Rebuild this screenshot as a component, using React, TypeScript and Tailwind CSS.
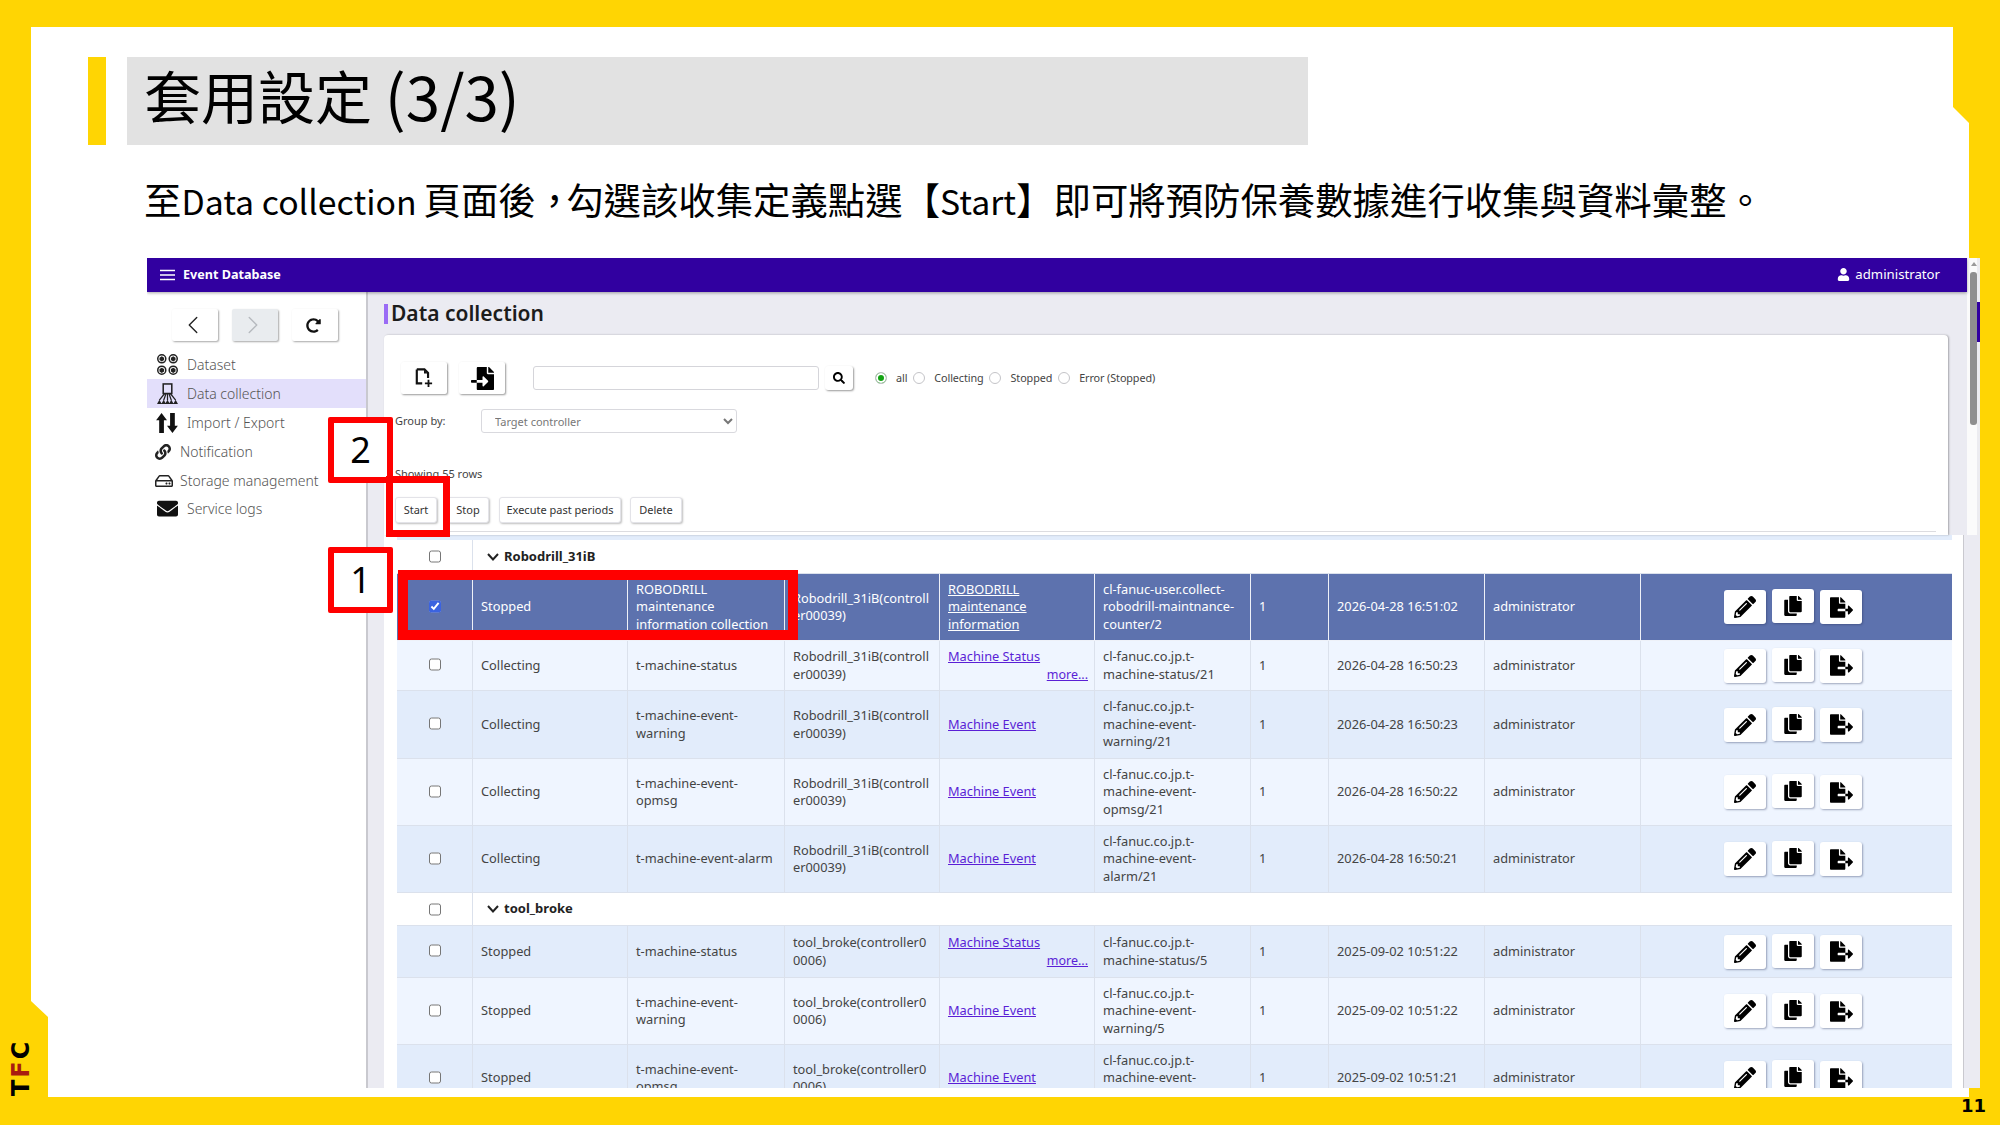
import { ChevronLeft, ChevronRight } from 'lucide-react';
import {
  FaCopy,
  FaEnvelope,
  FaFileExport,
  FaFileImport,
  FaLink,
  FaPencilAlt,
  FaRedoAlt,
  FaRegHdd,
  FaSearch,
  FaUser,
} from 'react-icons/fa';

const COLS = 'grid grid-cols-[76px_155px_157px_155px_155px_156px_78px_156px_156px_311px]';

type Row = {
  status: string;
  name: string;
  target: string;
  links: string;
  more?: boolean;
  id: string;
  date: string;
  tone: 'sel' | 'light' | 'dark';
  h: string;
};

const robodrill: Row[] = [
  {
    status: 'Stopped',
    name: 'ROBODRILL\nmaintenance\ninformation collection',
    target: 'Robodrill_31iB(controll\ner00039)',
    links: 'ROBODRILL\nmaintenance\ninformation',
    id: 'cl-fanuc-user.collect-\nrobodrill-maintnance-\ncounter/2',
    date: '2026-04-28 16:51:02',
    tone: 'sel',
    h: 'h-[67px]',
  },
  {
    status: 'Collecting',
    name: 't-machine-status',
    target: 'Robodrill_31iB(controll\ner00039)',
    links: 'Machine Status',
    more: true,
    id: 'cl-fanuc.co.jp.t-\nmachine-status/21',
    date: '2026-04-28 16:50:23',
    tone: 'light',
    h: 'h-[50px]',
  },
  {
    status: 'Collecting',
    name: 't-machine-event-\nwarning',
    target: 'Robodrill_31iB(controll\ner00039)',
    links: 'Machine Event',
    id: 'cl-fanuc.co.jp.t-\nmachine-event-\nwarning/21',
    date: '2026-04-28 16:50:23',
    tone: 'dark',
    h: 'h-[68px]',
  },
  {
    status: 'Collecting',
    name: 't-machine-event-\nopmsg',
    target: 'Robodrill_31iB(controll\ner00039)',
    links: 'Machine Event',
    id: 'cl-fanuc.co.jp.t-\nmachine-event-\nopmsg/21',
    date: '2026-04-28 16:50:22',
    tone: 'light',
    h: 'h-[67px]',
  },
  {
    status: 'Collecting',
    name: 't-machine-event-alarm',
    target: 'Robodrill_31iB(controll\ner00039)',
    links: 'Machine Event',
    id: 'cl-fanuc.co.jp.t-\nmachine-event-\nalarm/21',
    date: '2026-04-28 16:50:21',
    tone: 'dark',
    h: 'h-[67px]',
  },
];

const toolBroke: Row[] = [
  {
    status: 'Stopped',
    name: 't-machine-status',
    target: 'tool_broke(controller0\n0006)',
    links: 'Machine Status',
    more: true,
    id: 'cl-fanuc.co.jp.t-\nmachine-status/5',
    date: '2025-09-02 10:51:22',
    tone: 'dark',
    h: 'h-[52px]',
  },
  {
    status: 'Stopped',
    name: 't-machine-event-\nwarning',
    target: 'tool_broke(controller0\n0006)',
    links: 'Machine Event',
    id: 'cl-fanuc.co.jp.t-\nmachine-event-\nwarning/5',
    date: '2025-09-02 10:51:22',
    tone: 'light',
    h: 'h-[67px]',
  },
  {
    status: 'Stopped',
    name: 't-machine-event-\nopmsg',
    target: 'tool_broke(controller0\n0006)',
    links: 'Machine Event',
    id: 'cl-fanuc.co.jp.t-\nmachine-event-\nopmsg/5',
    date: '2025-09-02 10:51:21',
    tone: 'dark',
    h: 'h-[67px]',
  },
];

function DatasetIcon() {
  const cube = (x: number, y: number) => (
    <g key={`${x}-${y}`} transform={`translate(${x} ${y})`}>
      <circle cx="5" cy="5" r="4.2" fill="none" stroke="#222" strokeWidth="1.6" />
      <path d="M5 2.4 7.4 3.8V6.4L5 7.8 2.6 6.4V3.8Z" fill="#222" />
    </g>
  );
  return (
    <svg viewBox="0 0 22 22" className="w-[21px] h-[21px]">
      {cube(0, 0)}
      {cube(12, 0)}
      {cube(0, 12)}
      {cube(12, 12)}
    </svg>
  );
}

function CollectionIcon() {
  return (
    <svg viewBox="0 0 22 22" className="w-[21px] h-[21px]">
      <rect x="6.5" y="1" width="9" height="10" fill="none" stroke="#222" strokeWidth="1.6" />
      <path
        d="M8 11 2.5 18M9.5 11 7 18M11 11V18M12.5 11 15 18M14 11 19.5 18"
        fill="none"
        stroke="#222"
        strokeWidth="1.3"
      />
      <path d="M0 22 2.5 17.5 5 22ZM4.5 22 7 17.5 9.5 22ZM8.5 22 11 17.5 13.5 22ZM12.5 22 15 17.5 17.5 22ZM17 22 19.5 17.5 22 22Z" fill="#222" />
    </svg>
  );
}

function ArrowsIcon() {
  return (
    <svg viewBox="0 0 24 22" className="w-[22px] h-[20px]">
      <path d="M6 0 12 8H8.6V22H3.4V8H0ZM18 22 24 14H20.6V0H15.4V14H12Z" fill="#111" />
    </svg>
  );
}

function FilePlusIcon() {
  return (
    <svg viewBox="0 0 20 22" className="w-[18px] h-[20px]">
      <path d="M2 1.5H10.5L14.5 5.5V11M2 1.5V17H8" fill="none" stroke="#111" strokeWidth="2.4" />
      <path d="M10 5V2L13.5 6H10Z" fill="#111" />
      <path d="M15 13V21M11 17H19" fill="none" stroke="#111" strokeWidth="2" />
    </svg>
  );
}

function Lines({ text }: { text: string }) {
  return <span className="whitespace-pre-line">{text}</span>;
}

function RowActions() {
  const btn =
    'w-[42px] h-[34px] flex items-center justify-center rounded-[3px] bg-white text-black shadow-[1px_1px_2px_rgba(40,50,90,0.4)]';
  return (
    <div className="flex items-center justify-center h-full gap-[6px] pr-[7px]">
      <div className={btn}>
        <FaPencilAlt size={22} />
      </div>
      <div className={`${btn} -translate-y-px`}>
        <FaCopy size={20} />
      </div>
      <div className={btn}>
        <FaFileExport size={23} />
      </div>
    </div>
  );
}

function DataRow({ row }: { row: Row }) {
  const sel = row.tone === 'sel';
  const bg = sel ? 'bg-[#5d72ae] text-white' : row.tone === 'light' ? 'bg-[#eff5ff] text-[#444]' : 'bg-[#e2ecfb] text-[#444]';
  const line = sel ? 'border-[#eef1f8]' : 'border-[#dbe1ec]';
  const cell = `flex items-center px-[8px] border-r ${line}`;
  const link = sel ? 'text-white underline' : 'text-[#5a1fd6] underline';
  return (
    <div className={`${COLS} ${row.h} ${bg} border-b ${line} text-[12.8px] leading-[17.5px]`}>
      <div className={`${cell} justify-center`}>
        <input type="checkbox" checked={sel} readOnly className="w-[12px] h-[13px] accent-[#3b63e0] -translate-y-px" />
      </div>
      <div className={cell}>{row.status}</div>
      <div className={cell}>
        <Lines text={row.name} />
      </div>
      <div className={cell}>
        <Lines text={row.target} />
      </div>
      <div className={cell}>
        <div className="w-full">
          <div className={link}>
            <Lines text={row.links} />
          </div>
          {row.more && <div className={`${link} text-right text-[12.5px] -mr-[2px]`}>more...</div>}
        </div>
      </div>
      <div className={cell}>
        <Lines text={row.id} />
      </div>
      <div className={cell}>1</div>
      <div className={cell}>{row.date}</div>
      <div className={cell}>administrator</div>
      <RowActions />
    </div>
  );
}

function GroupRow({ label, h }: { label: string; h: string }) {
  return (
    <div className={`flex ${h} bg-white border-b border-[#dbe1ec] text-[13px] text-[#222]`}>
      <div className="w-[76px] flex items-center justify-center border-r border-[#dbe1ec]">
        <input type="checkbox" readOnly className="w-[12px] h-[13px]" />
      </div>
      <div className="flex items-center pl-[14px] gap-[5px] font-bold">
        <svg viewBox="0 0 12 8" className="w-[12px] h-[8px]">
          <path d="M1 1 6 6.5 11 1" fill="none" stroke="#222" strokeWidth="2" />
        </svg>
        {label}
      </div>
    </div>
  );
}

function ToolbarButton({ children, className }: { children: React.ReactNode; className: string }) {
  return (
    <button className={`h-[26px] rounded-[3px] bg-white border border-[#e3e3e8] shadow-[1px_1px_2px_rgba(0,0,0,0.25)] text-[11px] text-[#333] ${className}`}>
      {children}
    </button>
  );
}

function Sidebar() {
  const nav = 'w-[46px] h-[32px] flex items-center justify-center rounded-[2px] shadow-[1px_1px_2px_rgba(0,0,0,0.35)]';
  const item = 'flex items-center h-[29px] text-[14px] font-light text-[#555]';
  return (
    <aside className="w-[219px] shrink-0 bg-white border-r-2 border-[#c9c9cf] box-content">
      <div className="flex gap-[14px] pl-[25px] pt-[17px]">
        <div className={`${nav} bg-white text-[#222]`}>
          <ChevronLeft size={30} strokeWidth={1.1} className="-translate-x-[2px]" />
        </div>
        <div className={`${nav} bg-[#e9ecef] text-[#b5b9be]`}>
          <ChevronRight size={30} strokeWidth={1.1} className="-translate-x-[2px]" />
        </div>
        <div className={`${nav} bg-white text-[#111]`}>
          <FaRedoAlt size={15} className="-translate-x-[2px]" />
        </div>
      </div>
      <nav className="mt-[9px]">
        <div className={`${item} pl-[10px] gap-[9px]`}>
          <DatasetIcon />
          Dataset
        </div>
        <div className={`${item} pl-[10px] gap-[9px] bg-[#e3dffb]`}>
          <CollectionIcon />
          Data collection
        </div>
        <div className={`${item} pl-[9px] gap-[9px]`}>
          <ArrowsIcon />
          Import / Export
        </div>
        <div className={`${item} pl-[8px] gap-[9px]`}>
          <FaLink size={16} className="text-[#222]" />
          Notification
        </div>
        <div className={`${item} pl-[8px] gap-[7px]`}>
          <FaRegHdd size={18} className="text-[#222]" />
          Storage management
        </div>
        <div className={`${item} !h-[26px] pl-[10px] gap-[9px]`}>
          <FaEnvelope size={21} className="text-[#111]" />
          Service logs
        </div>
      </nav>
    </aside>
  );
}

function Filters() {
  const radio =
    'appearance-none w-[12px] h-[12px] rounded-full border border-[#c4c4c8] bg-white checked:bg-[#12a312] checked:shadow-[inset_0_0_0_2px_white]';
  return (
    <div className="flex items-center text-[10.8px] text-[#444] ml-[22px] tracking-[-0.1px]">
      <input type="radio" name="state" defaultChecked className={radio} />
      <span className="ml-[9px]">all</span>
      <input type="radio" name="state" className={`${radio} ml-[6px]`} />
      <span className="ml-[9px]">Collecting</span>
      <input type="radio" name="state" className={`${radio} ml-[5px]`} />
      <span className="ml-[10px]">Stopped</span>
      <input type="radio" name="state" className={`${radio} ml-[6px]`} />
      <span className="ml-[9px]">Error (Stopped)</span>
    </div>
  );
}

export default function App() {
  return (
    <div className="relative w-[2000px] h-[1125px] overflow-hidden bg-[#ffd503] font-['Noto_Sans_CJK_TC','Noto_Sans',sans-serif] text-black">
      {/* white slide shape with the cut corners */}
      <div className="absolute left-[31px] top-[27px] w-[1938px] h-[1070px] bg-white [clip-path:polygon(0_0,1922px_0,1922px_80px,1938px_96px,1938px_1070px,17px_1070px,17px_990px,0_974px)]" />

      <div className="relative pt-[57px]">
        <div className="flex gap-[21px] h-[88px] ml-[88px]">
          <div className="w-[18px] bg-[#ffd503]" />
          <div className="w-[1181px] bg-[#e2e2e2] pl-[17px] pb-[14px] flex items-center text-[57px] leading-none whitespace-pre">
            套用設定 <span className="text-[62px]">(3/3)</span>
          </div>
        </div>

        <p className="ml-[144px] mt-[27px] h-[55px] text-[37.4px] leading-[55px] whitespace-nowrap">
          至<span className="text-[33.8px]">Data collection</span>
          <span className="ml-[7px]">頁面後</span>
          <span className="tracking-[-7px]">，</span>勾選該收集定義點選【<span className="text-[33.8px]">Start</span>】即可將預防保養數據進行收集與資料彙整。
        </p>

        {/* pasted browser screenshot */}
        <div className="ml-[147px] mt-[31px] w-[1833px] h-[830px] overflow-hidden flex flex-col font-['Noto_Sans',sans-serif]">
          <div className="flex h-[277px] shrink-0">
            <div className="w-[1820px] flex flex-col">
              <header className="h-[34px] shrink-0 bg-[#3100a0] text-white flex items-center justify-between pl-[13px] pr-[27px] shadow-[0_1px_3px_rgba(0,0,0,0.35)] relative z-10">
                <div className="flex items-center gap-[8px] text-[12.6px] font-bold">
                  <svg viewBox="0 0 15 12" className="w-[15px] h-[12px]">
                    <path d="M0 1.5H15M0 6H15M0 10.5H15" stroke="#fff" strokeWidth="1.6" />
                  </svg>
                  Event Database
                </div>
                <div className="flex items-center gap-[5px] text-[13.2px]">
                  <FaUser size={13} />
                  administrator
                </div>
              </header>
              <div className="flex flex-1 min-h-0">
                <Sidebar />
                <main className="flex-1 bg-[#ebebf2] pl-[16px] pr-[19px] min-w-0">
                  <h1 className="flex items-center h-[20px] mt-[12px] text-[21px] font-semibold text-[#1c1c1c]">
                    <span className="w-[4px] h-[20px] bg-[#9a6bf5] mr-[3px]" />
                    Data collection
                  </h1>
                  <section className="mt-[11px] h-[200px] bg-white rounded-t-[4px] shadow-[1px_0_2px_rgba(0,0,0,0.3)] relative">
                    <div className="flex items-center pt-[27px] pl-[17px]">
                      <div className="w-[46px] h-[32px] flex items-center justify-center rounded-[2px] bg-white shadow-[1px_1px_2px_rgba(0,0,0,0.4)]">
                        <FilePlusIcon />
                      </div>
                      <div className="w-[46px] h-[32px] ml-[12px] flex items-center justify-center rounded-[2px] bg-white shadow-[1px_1px_2px_rgba(0,0,0,0.4)] text-black">
                        <FaFileImport size={23} />
                      </div>
                      <input className="ml-[28px] w-[286px] h-[24px] border border-[#d5d5da] rounded-[3px] bg-white" />
                      <div className="ml-[6px] w-[28px] h-[24px] flex items-center justify-center rounded-[3px] bg-white shadow-[1px_1px_2px_rgba(0,0,0,0.4)]">
                        <FaSearch size={12} />
                      </div>
                      <Filters />
                    </div>
                    <div className="flex items-center mt-[15px] pl-[11px] text-[11px] text-[#444]">
                      <span className="w-[86px]">Group by:</span>
                      <select className="w-[256px] h-[24px] border border-[#d9d9de] rounded-[3px] pl-[9px] bg-white text-[11px] text-[#777]">
                        <option>Target controller</option>
                      </select>
                    </div>
                    <div className="mt-[33px] pl-[11px] h-[16px] leading-[16px] text-[11px] text-[#444]">Showing 55 rows</div>
                    <div className="flex mt-[15px] pl-[11px]">
                      <ToolbarButton className="w-[42px]">Start</ToolbarButton>
                      <ToolbarButton className="w-[42px] ml-[10px]">Stop</ToolbarButton>
                      <ToolbarButton className="w-[122px] ml-[10px]">Execute past periods</ToolbarButton>
                      <ToolbarButton className="w-[52px] ml-[9px]">Delete</ToolbarButton>
                    </div>
                    <div className="ml-[12px] mr-[12px] mt-[8px] border-t border-[#dcdce0]" />
                  </section>
                </main>
              </div>
            </div>
            <div className="w-[10px] bg-[#fbfbfb] pl-[3px] pt-[4px]">
              <div className="w-0 h-0 ml-[1px] border-x-[3px] border-b-[4px] border-x-transparent border-b-[#9a9a9a]" />
              <div className="mt-[6px] h-[153px] w-[7px] rounded-[3px] bg-[#8f8f8f]" />
            </div>
            <div className="w-[3px] bg-[#ececf0]">
              <div className="mt-[44px] h-[40px] bg-[#3100a0]" />
            </div>
          </div>

          <div className="flex flex-1 min-h-0">
            <div className="w-[219px] shrink-0 bg-white border-r-2 border-[#c9c9cf] box-content" />
            <div className="w-[16px] shrink-0 bg-[#ebebf2]" />
            <div className="w-[1579px] shrink-0 bg-white pl-[13px] pr-[11px] overflow-hidden">
              <div className={`${COLS} h-[5px] bg-[#e2ecfb]`} />
              <GroupRow label="Robodrill_31iB" h="h-[34px]" />
              {robodrill.map((row) => (
                <DataRow key={row.name + row.date} row={row} />
              ))}
              <GroupRow label="tool_broke" h="h-[33px]" />
              {toolBroke.map((row) => (
                <DataRow key={row.name + row.date} row={row} />
              ))}
            </div>
            <div className="flex-1 bg-[#ebebf2] border-l border-[#c9c9cf]" />
          </div>
        </div>
      </div>

      {/* red annotations drawn on the slide */}
      <div className="absolute left-[328px] top-[417px] w-[65px] h-[66px] bg-white border-[6px] border-[#ff0000] rounded-[2px] flex items-center justify-center text-[36px] leading-none font-['Noto_Sans',sans-serif]">2</div>
      <div className="absolute left-[328px] top-[547px] w-[65px] h-[66px] bg-white border-[6px] border-[#ff0000] rounded-[2px] flex items-center justify-center text-[36px] leading-none font-['Noto_Sans',sans-serif]">1</div>
      <div className="absolute left-[386px] top-[476px] w-[64px] h-[61px] border-[7px] border-[#ff0000]" />
      <div className="absolute left-[398px] top-[570px] w-[400px] h-[70px] border-[10px] border-[#ff0000]" />

      {/* slide footer marks */}
      <div className="absolute left-[9px] top-[1038px] h-[58px] [writing-mode:vertical-rl] rotate-180 font-['DejaVu_Sans',sans-serif] font-bold text-[24px] leading-none tracking-[2px]">
        T<span className="text-[#a81c10]">F</span>C
      </div>
      <div className="absolute left-[1961px] top-[1096px] font-['DejaVu_Sans',sans-serif] font-bold text-[18px] leading-[20px]">11</div>
    </div>
  );
}
